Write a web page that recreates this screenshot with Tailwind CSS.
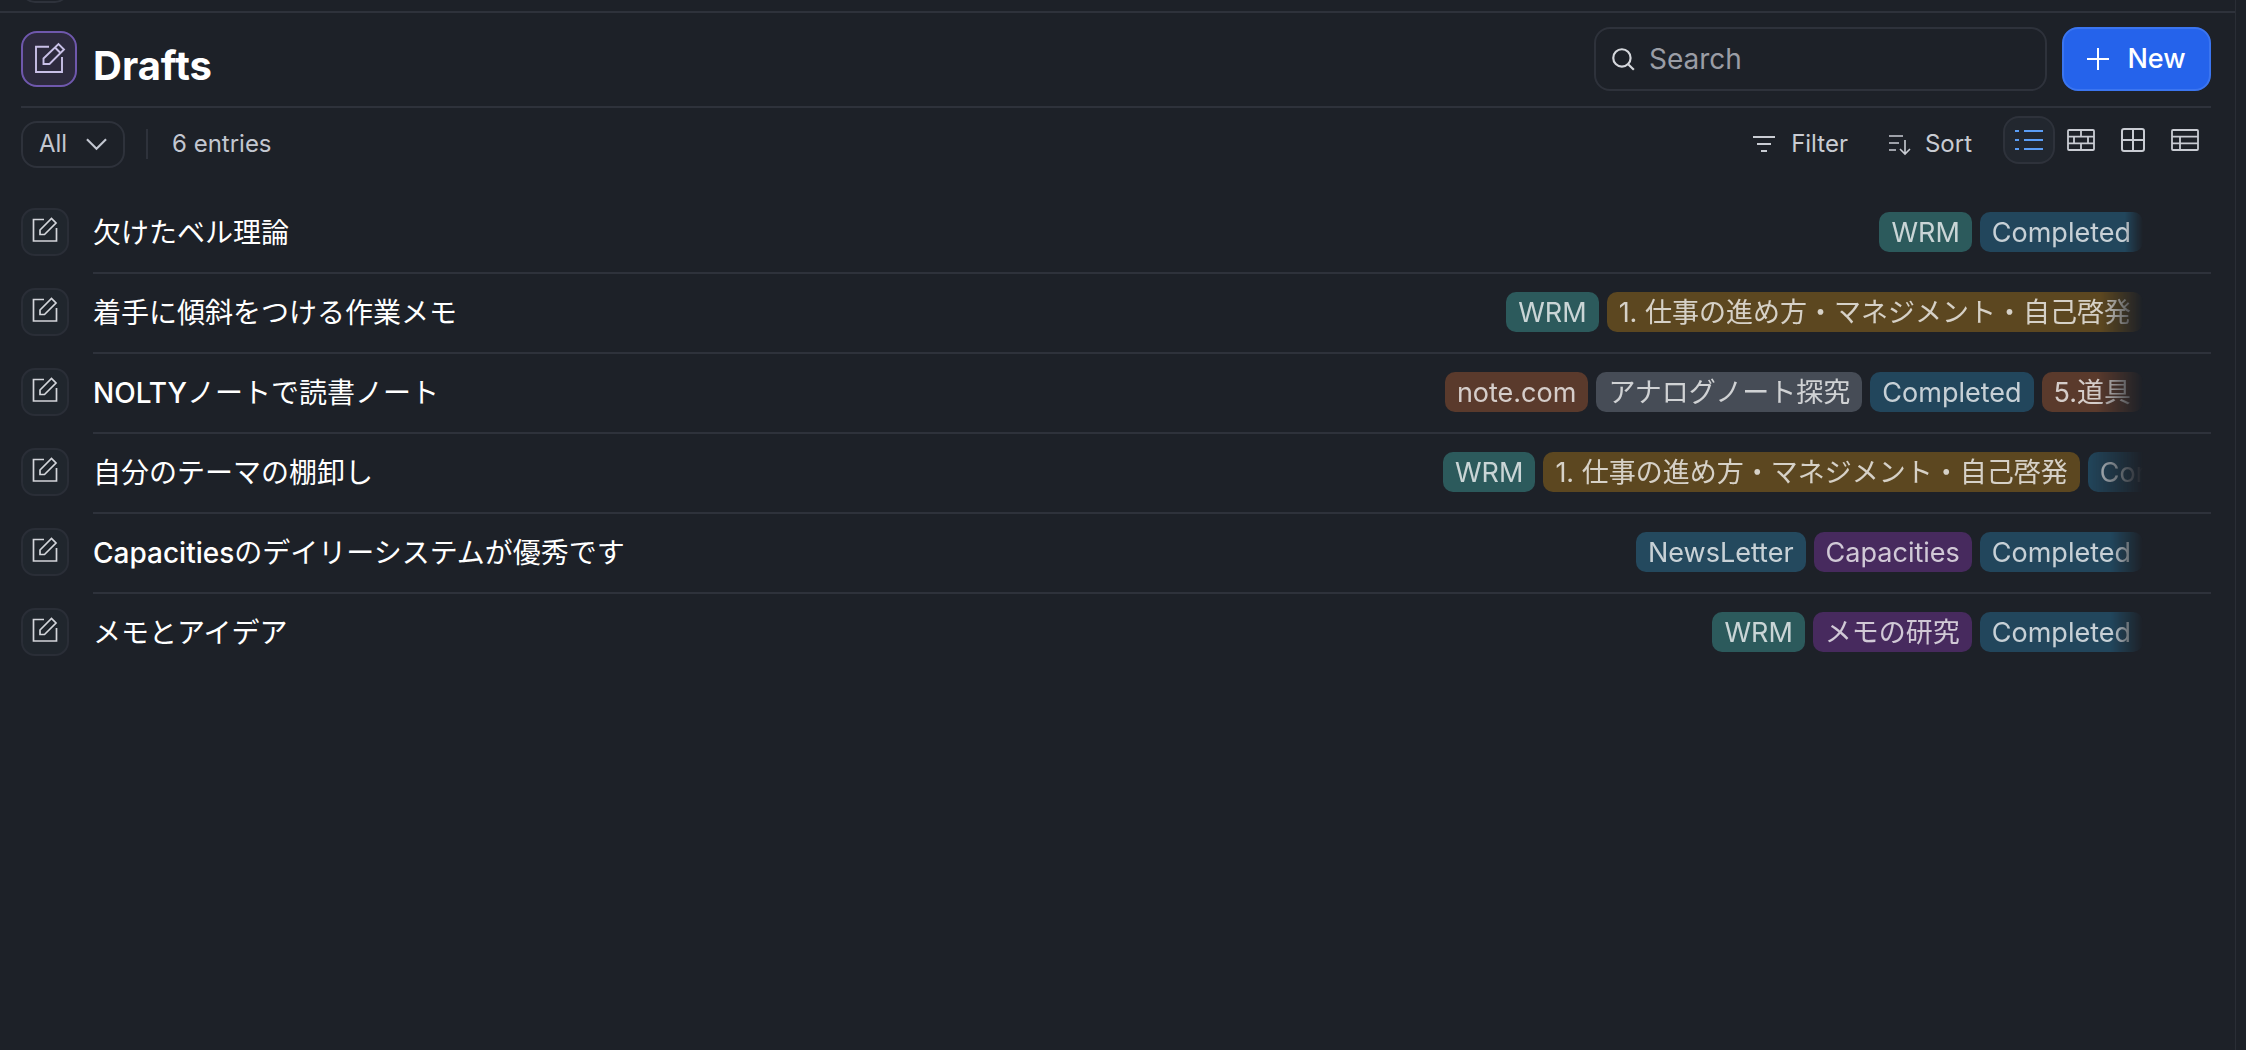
<!doctype html>
<html lang="ja"><head><meta charset="utf-8"><title>Drafts</title>
<script src="https://cdn.jsdelivr.net/npm/@tailwindcss/browser@4"></script>
</head>
<body class="bg-[#1d2128]">
<div class="flex h-[1050px] w-[2236px] flex-col border-r border-[#2a2e36] font-['Inter','Noto_Sans_CJK_JP',sans-serif] text-white">
  <div class="flex h-[13px] shrink-0 items-end overflow-hidden border-b-2 border-[#2e323b] pl-[21px]">
    <div class="mb-[8px] h-[48px] w-[48px] shrink-0 rounded-[14px] border-2 border-[#2e323b]"></div>
  </div>
  <div class="ml-[21px] mr-[24px] flex h-[95px] shrink-0 items-start justify-between border-b-2 border-[#2e323b]">
    <div class="flex items-start gap-[16px] pt-[18px]">
      <div class="flex h-[56px] w-[56px] items-center justify-center rounded-[16px] border-2 border-[#6f58ad] bg-[#2d2a3e]">
        <svg class="h-[32px] w-[32px] translate-x-[1px] -translate-y-[1px] text-[#c9c0e8]" viewBox="0 0 32 32" fill="none" stroke="currentColor" stroke-width="1.9"><path d="M15 4.7H2V30H28V15"/><path d="M9.5 16.5 24.5 2 30 7.5 15.5 22H9.5Z"/><path d="M21 5.5 26.5 11"/></svg>
      </div>
      <h1 class="mt-[11px] text-[40px] leading-[48px] font-bold">Drafts</h1>
    </div>
    <div class="flex gap-[15px] pt-[14px]">
      <div class="flex h-[64px] w-[453px] items-center gap-[13px] rounded-[16px] border-2 border-[#2e323b] pl-[14px] text-[#9a9da5]">
        <svg class="h-[26px] w-[26px] text-[#d5d7dc]" viewBox="0 0 24 24" fill="none" stroke="currentColor" stroke-width="2"><circle cx="11" cy="11" r="8"/><path d="M17 17l5 5"/></svg>
        <span class="text-[28px]">Search</span>
      </div>
      <button class="flex h-[64px] w-[149px] items-center justify-center gap-[18px] rounded-[16px] border-2 border-[#3b75f0] bg-[#2563eb] text-[27px] font-medium">
        <svg class="h-[22px] w-[22px]" viewBox="0 0 22 22" fill="none" stroke="currentColor" stroke-width="2"><path d="M11 0v22M0 11h22"/></svg>New
      </button>
    </div>
  </div>
  <div class="ml-[21px] mr-[36px] flex h-[72px] shrink-0 items-center justify-between">
    <div class="flex items-center text-[24px] text-[#c3c7d1]">
      <div class="flex h-[47px] w-[104px] items-center gap-[19px] rounded-[16px] border-2 border-[#2e323b] pl-[16px]">
        <span>All</span>
        <svg class="h-[14px] w-[21px]" viewBox="0 0 22 14" fill="none" stroke="currentColor" stroke-width="2.2"><path d="M1 2l10 10L21 2"/></svg>
      </div>
      <div class="ml-[21px] mr-[24px] h-[30px] w-[2px] bg-[#2e323b]"></div>
      <span>6 entries</span>
    </div>
    <div class="flex items-center text-[24px] text-[#c9ccd3]">
      <svg class="h-[18px] w-[22px]" viewBox="0 0 22 18" fill="none" stroke="currentColor" stroke-width="2"><path d="M0 2h22M4 9h14M8 16h6"/></svg>
      <span class="ml-[16px]">Filter</span>
      <svg class="ml-[40px] h-[24px] w-[24px]" viewBox="0 0 24 24" fill="none" stroke="currentColor" stroke-width="1.6"><path d="M1 4h14M1 11h10M1 18h7"/><path d="M17 8v14M12 17l5 5 5-5"/></svg>
      <span class="ml-[13px]">Sort</span>
      <div class="ml-[31px] flex h-[48px] w-[52px] -translate-y-[4px] items-center justify-center rounded-[16px] border-2 border-[#2e323b] bg-[#22272f]">
        <svg class="h-[20px] w-[28px] text-[#5b9df5]" viewBox="0 0 28 20" fill="none" stroke="currentColor" stroke-width="2.2"><path d="M0 1h4M9 1h19M0 10h4M9 10h19M0 19h4M9 19h19"/></svg>
      </div>
      <svg class="ml-[12px] h-[22px] w-[28px] -translate-y-[4px]" viewBox="0 0 28 22" fill="none" stroke="currentColor" stroke-width="1.8"><rect x="1" y="1" width="26" height="20" rx="1"/><path d="M1 7.7h26M1 14.3h26M14 1v6.7M14 14.3V21M7 7.7v6.6M21 7.7v6.6"/></svg>
      <svg class="ml-[26px] h-[24px] w-[24px] -translate-y-[4px]" viewBox="0 0 24 24" fill="none" stroke="currentColor" stroke-width="2"><rect x="1" y="1" width="22" height="22" rx="2"/><path d="M12 1v22M1 12h22"/></svg>
      <svg class="ml-[26px] h-[22px] w-[28px] -translate-y-[4px]" viewBox="0 0 28 22" fill="none" stroke="currentColor" stroke-width="1.8"><rect x="1" y="1" width="26" height="20" rx="1"/><path d="M1 7.7h26M1 14.3h26M9 7.7V21"/></svg>
    </div>
  </div>
  <div class="ml-[21px] mr-[24px] mt-[12px] flex flex-col">

    <div class="flex h-[80px] items-center gap-[24px]">
      <div class="flex h-[48px] w-[48px] shrink-0 items-center justify-center rounded-[14px] border-2 border-[#2a2e37] bg-[#20262d]"><svg class="h-[26px] w-[26px] -translate-y-[3px] text-[#d3d5da]" viewBox="0 0 26 26" fill="none" stroke="currentColor" stroke-width="1.7"><path d="M12 3.5H1.5V25H24.5V12"/><path d="M8 14 19.5 2.5 24 7 12.5 18.5H8Z"/></svg></div>
      <div class="flex h-[82px] min-w-0 flex-1 items-center justify-between self-start border-b-2 border-[#2e323b] pr-[68px]">
        <span class="pt-[2px] text-[28px]">欠けたベル理論</span>
        <div class="flex max-w-[699px] justify-end gap-[8px] overflow-hidden whitespace-nowrap text-[27px] leading-[42px] text-white/75 [mask-image:linear-gradient(to_right,black_calc(100%-18px),transparent)]">
          <span class="h-[40px] rounded-[10px] bg-[#2c5a5c] px-[12px]">WRM</span><span class="h-[40px] rounded-[10px] bg-[#22465c] px-[12px]">Completed</span>
        </div>
      </div>
    </div>

    <div class="flex h-[80px] items-center gap-[24px]">
      <div class="flex h-[48px] w-[48px] shrink-0 items-center justify-center rounded-[14px] border-2 border-[#2a2e37] bg-[#20262d]"><svg class="h-[26px] w-[26px] -translate-y-[3px] text-[#d3d5da]" viewBox="0 0 26 26" fill="none" stroke="currentColor" stroke-width="1.7"><path d="M12 3.5H1.5V25H24.5V12"/><path d="M8 14 19.5 2.5 24 7 12.5 18.5H8Z"/></svg></div>
      <div class="flex h-[82px] min-w-0 flex-1 items-center justify-between self-start border-b-2 border-[#2e323b] pr-[68px]">
        <span class="pt-[2px] text-[28px]">着手に傾斜をつける作業メモ</span>
        <div class="flex max-w-[699px] justify-end gap-[8px] overflow-hidden whitespace-nowrap text-[27px] leading-[42px] text-white/75 [mask-image:linear-gradient(to_right,black_calc(100%-42px),transparent)]">
          <span class="h-[40px] rounded-[10px] bg-[#2c5a5c] px-[12px]">WRM</span><span class="h-[40px] rounded-[10px] bg-[#5c4720] px-[12px]">1. 仕事の進め方・マネジメント・自己啓発</span>
        </div>
      </div>
    </div>

    <div class="flex h-[80px] items-center gap-[24px]">
      <div class="flex h-[48px] w-[48px] shrink-0 items-center justify-center rounded-[14px] border-2 border-[#2a2e37] bg-[#20262d]"><svg class="h-[26px] w-[26px] -translate-y-[3px] text-[#d3d5da]" viewBox="0 0 26 26" fill="none" stroke="currentColor" stroke-width="1.7"><path d="M12 3.5H1.5V25H24.5V12"/><path d="M8 14 19.5 2.5 24 7 12.5 18.5H8Z"/></svg></div>
      <div class="flex h-[82px] min-w-0 flex-1 items-center justify-between self-start border-b-2 border-[#2e323b] pr-[68px]">
        <span class="pt-[2px] text-[28px]"><span class="font-medium">NOLTY</span>ノートで読書ノート</span>
        <div class="flex max-w-[699px] justify-end gap-[8px] overflow-hidden whitespace-nowrap text-[27px] leading-[42px] text-white/75 [mask-image:linear-gradient(to_right,black_calc(100%-46px),transparent)]">
          <span class="h-[40px] shrink-0 rounded-[10px] bg-[#5a3a2c] px-[12px]">note.com</span><span class="h-[40px] shrink-0 rounded-[10px] bg-[#464c56] px-[12px]">アナログノート探究</span><span class="h-[40px] shrink-0 rounded-[10px] bg-[#22465c] px-[12px]">Completed</span><span class="h-[40px] shrink-0 rounded-[10px] bg-[#5a3a2c] px-[12px]">5.道具</span>
        </div>
      </div>
    </div>

    <div class="flex h-[80px] items-center gap-[24px]">
      <div class="flex h-[48px] w-[48px] shrink-0 items-center justify-center rounded-[14px] border-2 border-[#2a2e37] bg-[#20262d]"><svg class="h-[26px] w-[26px] -translate-y-[3px] text-[#d3d5da]" viewBox="0 0 26 26" fill="none" stroke="currentColor" stroke-width="1.7"><path d="M12 3.5H1.5V25H24.5V12"/><path d="M8 14 19.5 2.5 24 7 12.5 18.5H8Z"/></svg></div>
      <div class="flex h-[82px] min-w-0 flex-1 items-center justify-between self-start border-b-2 border-[#2e323b] pr-[68px]">
        <span class="pt-[2px] text-[28px]">自分のテーマの棚卸し</span>
        <div class="flex w-[700px] gap-[8px] overflow-hidden whitespace-nowrap text-[27px] leading-[42px] text-white/75 [mask-image:linear-gradient(to_right,black_calc(100%-56px),transparent)]">
          <span class="h-[40px] shrink-0 rounded-[10px] bg-[#2c5a5c] px-[12px]">WRM</span><span class="h-[40px] shrink-0 rounded-[10px] bg-[#5c4720] px-[12px]">1. 仕事の進め方・マネジメント・自己啓発</span><span class="h-[40px] shrink-0 rounded-[10px] bg-[#22465c] px-[12px]">Completed</span>
        </div>
      </div>
    </div>

    <div class="flex h-[80px] items-center gap-[24px]">
      <div class="flex h-[48px] w-[48px] shrink-0 items-center justify-center rounded-[14px] border-2 border-[#2a2e37] bg-[#20262d]"><svg class="h-[26px] w-[26px] -translate-y-[3px] text-[#d3d5da]" viewBox="0 0 26 26" fill="none" stroke="currentColor" stroke-width="1.7"><path d="M12 3.5H1.5V25H24.5V12"/><path d="M8 14 19.5 2.5 24 7 12.5 18.5H8Z"/></svg></div>
      <div class="flex h-[82px] min-w-0 flex-1 items-center justify-between self-start border-b-2 border-[#2e323b] pr-[68px]">
        <span class="pt-[2px] text-[28px]"><span class="font-medium">Capacities</span>のデイリーシステムが優秀です</span>
        <div class="flex max-w-[699px] justify-end gap-[8px] overflow-hidden whitespace-nowrap text-[27px] leading-[42px] text-white/75 [mask-image:linear-gradient(to_right,black_calc(100%-32px),transparent)]">
          <span class="h-[40px] rounded-[10px] bg-[#24495e] px-[12px]">NewsLetter</span><span class="h-[40px] rounded-[10px] bg-[#472a5e] px-[12px]">Capacities</span><span class="h-[40px] rounded-[10px] bg-[#22465c] px-[12px]">Completed</span>
        </div>
      </div>
    </div>

    <div class="flex h-[80px] items-center gap-[24px]">
      <div class="flex h-[48px] w-[48px] shrink-0 items-center justify-center rounded-[14px] border-2 border-[#2a2e37] bg-[#20262d]"><svg class="h-[26px] w-[26px] -translate-y-[3px] text-[#d3d5da]" viewBox="0 0 26 26" fill="none" stroke="currentColor" stroke-width="1.7"><path d="M12 3.5H1.5V25H24.5V12"/><path d="M8 14 19.5 2.5 24 7 12.5 18.5H8Z"/></svg></div>
      <div class="flex h-[80px] min-w-0 flex-1 items-center justify-between self-start pr-[68px]">
        <span class="pt-[2px] text-[28px]">メモとアイデア</span>
        <div class="flex max-w-[699px] justify-end gap-[8px] overflow-hidden whitespace-nowrap text-[27px] leading-[42px] text-white/75 [mask-image:linear-gradient(to_right,black_calc(100%-32px),transparent)]">
          <span class="h-[40px] rounded-[10px] bg-[#2c5a5c] px-[12px]">WRM</span><span class="h-[40px] rounded-[10px] bg-[#472a5e] px-[12px]">メモの研究</span><span class="h-[40px] rounded-[10px] bg-[#22465c] px-[12px]">Completed</span>
        </div>
      </div>
    </div>

  </div>
</div>
</body></html>
